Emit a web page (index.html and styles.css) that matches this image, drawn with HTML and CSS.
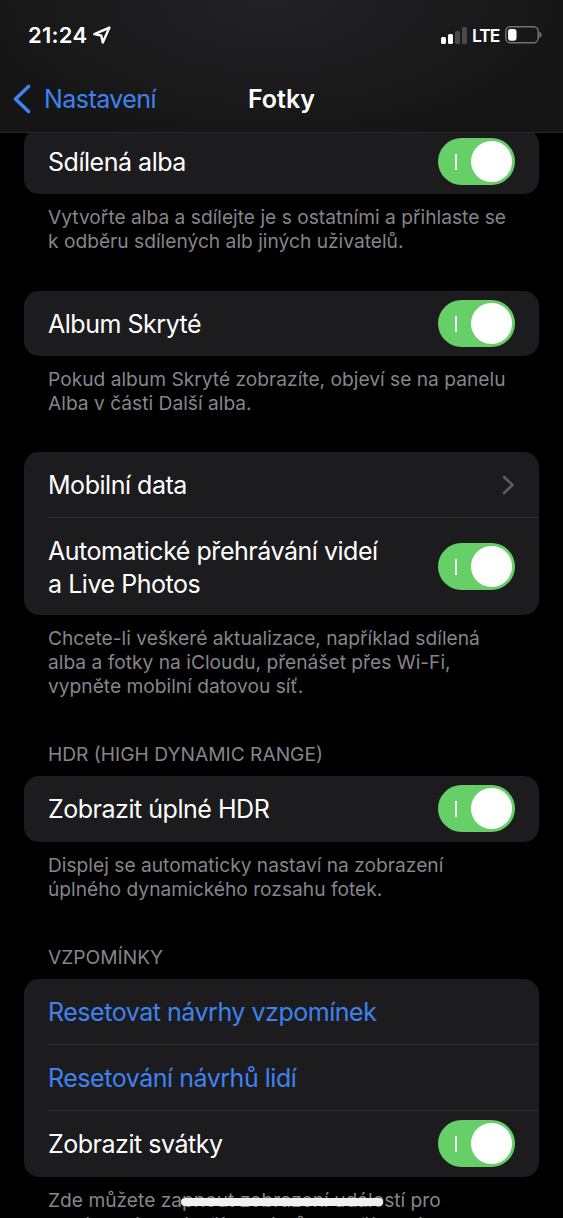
FILE: index.html
```
<!DOCTYPE html>
<html lang="cs">
<head>
<meta charset="utf-8">
<title>Fotky</title>
<link rel="stylesheet" href="styles.css">
</head>
<body>
<div class="screen">
  <header class="top">
    <div class="status">
      <span class="time">21:24</span>
      <svg class="location" width="18" height="18" viewBox="0 0 18 18"><path d="M16.4 1.6 1.4 8.2 8.3 9.7 9.8 16.6Z" fill="none" stroke="#fff" stroke-width="2.4" stroke-linejoin="round"/></svg>
      <svg class="signal" width="27" height="17" viewBox="0 0 27 17"><rect x="0" y="10" width="5" height="7" rx="1.6" fill="#fff"/><rect x="7" y="7" width="5" height="10" rx="1.6" fill="#fff"/><rect x="14" y="4" width="5" height="13" rx="1.6" fill="#4a4a4b"/><rect x="21" y="0" width="5" height="17" rx="1.6" fill="#4a4a4b"/></svg>
      <span class="lte">LTE</span>
      <svg class="battery" width="38" height="18" viewBox="0 0 38 18"><rect x=".8" y=".8" width="32.4" height="16" rx="4.6" fill="none" stroke="#747475" stroke-width="1.5"/><rect x="3" y="3" width="8.5" height="11.7" rx="2.6" fill="#fff"/><path d="M34.4 5.8c3 1 3 5 0 6Z" fill="#747475"/></svg>
    </div>
    <nav class="nav">
      <div class="back"><svg width="18" height="30" viewBox="0 0 18 30"><path d="M15.5 2.5 2.5 15l13 12.5" fill="none" stroke="#3f82f0" stroke-width="3.6" stroke-linecap="round" stroke-linejoin="round"/></svg><span>Nastavení</span></div>
      <h1 class="title">Fotky</h1>
    </nav>
  </header>
  <main class="list">
    <section class="card first"><div class="row"><span class="label">Sdílená alba</span><span class="switch"></span></div></section>
    <p class="note"><span>Vytvořte alba a sdílejte je s ostatními a přihlaste se</span><span>k odběru sdílených alb jiných uživatelů.</span></p>
    <section class="card"><div class="row"><span class="label">Album Skryté</span><span class="switch"></span></div></section>
    <p class="note"><span>Pokud album Skryté zobrazíte, objeví se na panelu</span><span>Alba v části Další alba.</span></p>
    <section class="card">
      <div class="row short"><span class="label">Mobilní data</span><svg class="chevron" width="13" height="20" viewBox="0 0 13 20"><path d="M2 2l8.5 8L2 18" fill="none" stroke="#5c5c60" stroke-width="2.7" stroke-linecap="round" stroke-linejoin="round"/></svg></div>
      <div class="row tall"><span class="label"><span>Automatické přehrávání videí</span><span>a Live Photos</span></span><span class="switch"></span></div>
    </section>
    <p class="note three"><span>Chcete-li veškeré aktualizace, například sdílená</span><span>alba a fotky na iCloudu, přenášet přes Wi-Fi,</span><span>vypněte mobilní datovou síť.</span></p>
    <h2 class="heading">HDR (HIGH DYNAMIC RANGE)</h2>
    <section class="card"><div class="row"><span class="label">Zobrazit úplné HDR</span><span class="switch"></span></div></section>
    <p class="note before-heading"><span>Displej se automaticky nastaví na zobrazení</span><span>úplného dynamického rozsahu fotek.</span></p>
    <h2 class="heading">VZPOMÍNKY</h2>
    <section class="card">
      <div class="row short"><span class="label link">Resetovat návrhy vzpomínek</span></div>
      <div class="row"><span class="label link">Resetování návrhů lidí</span></div>
      <div class="row last"><span class="label">Zobrazit svátky</span><span class="switch"></span></div>
    </section>
    <p class="note final"><span>Zde můžete zapnout zobrazení událostí pro</span><span>oznámených výročí a svátků ve vaší zemi, kde</span></p>
  </main>
  <div class="home"></div>
</div>
</body>
</html>
```
FILE: styles.css
```
* { box-sizing: border-box; }
body { margin: 0; background: #000; color: #fff; font-family: Inter, "Liberation Sans", sans-serif; }
.screen { position: relative; width: 563px; height: 1218px; overflow: hidden; background: #000; }
.top { position: relative; z-index: 1; height: 133px; background: radial-gradient(ellipse 320px 150px at 270px 0, #222224, #151516); border-bottom: 1px solid #28282a; }
.status { display: flex; align-items: center; height: 70px; padding-left: 28px; }
.time { width: 65px; font-size: 22px; font-weight: 600; letter-spacing: .25px; }
.signal { margin-left: 330px; }
.lte { width: 33px; margin-left: 4px; font-size: 17.5px; font-weight: 600; letter-spacing: -1px; }
.nav { display: grid; grid-template-columns: 1fr auto 1fr; align-items: center; height: 58px; }
.back { display: flex; align-items: center; gap: 13px; padding-left: 13px; color: #3f82f0; font-size: 25px; letter-spacing: -.55px; }
.title { margin: 0; font-size: 25px; font-weight: 600; }
.list { padding: 0 24px; }
.card { border-radius: 15px; background: #1c1c1e; }
.first { margin-top: -4.5px; }
.first + .note { height: 96.5px; }
.row { display: flex; align-items: center; justify-content: space-between; height: 65.5px; margin-left: 24px; padding-right: 24px; }
.row + .row { border-top: 1px solid #2e2e30; height: 66px; }
.short { height: 65px; }
.row + .tall { height: 97.5px; }
.row + .last { height: 66.5px; }
.label { padding-top: 2px; font-size: 25px; line-height: 33px; letter-spacing: -.47px; white-space: nowrap; }
.tall .label { padding-top: 3px; }
.label span { display: block; }
.link { color: #3f82f0; }
.switch { width: 77px; height: 47px; border-radius: 24px; background: radial-gradient(circle at 53.5px 23.5px, #fff 20px, transparent 21px), linear-gradient(#f0faf0, #f0faf0) 17px 16px / 2px 16px no-repeat, #67cf67; }
.note { height: 96px; margin: 0; padding: 11px 24px 0; color: #85858a; font-size: 19.2px; line-height: 24px; white-space: nowrap; }
.note span { display: block; }
.three { height: 117.5px; }
.before-heading { height: 93.5px; }
.final span + span { padding-top: 1px; }
.heading { height: 44px; margin: 0; padding: 10px 24px; color: #85858a; font-size: 19.2px; font-weight: 400; line-height: 24px; }
.home { position: absolute; left: 181px; top: 1198px; width: 202px; height: 8px; border-radius: 4px; background: #f0f0f0; }
```
